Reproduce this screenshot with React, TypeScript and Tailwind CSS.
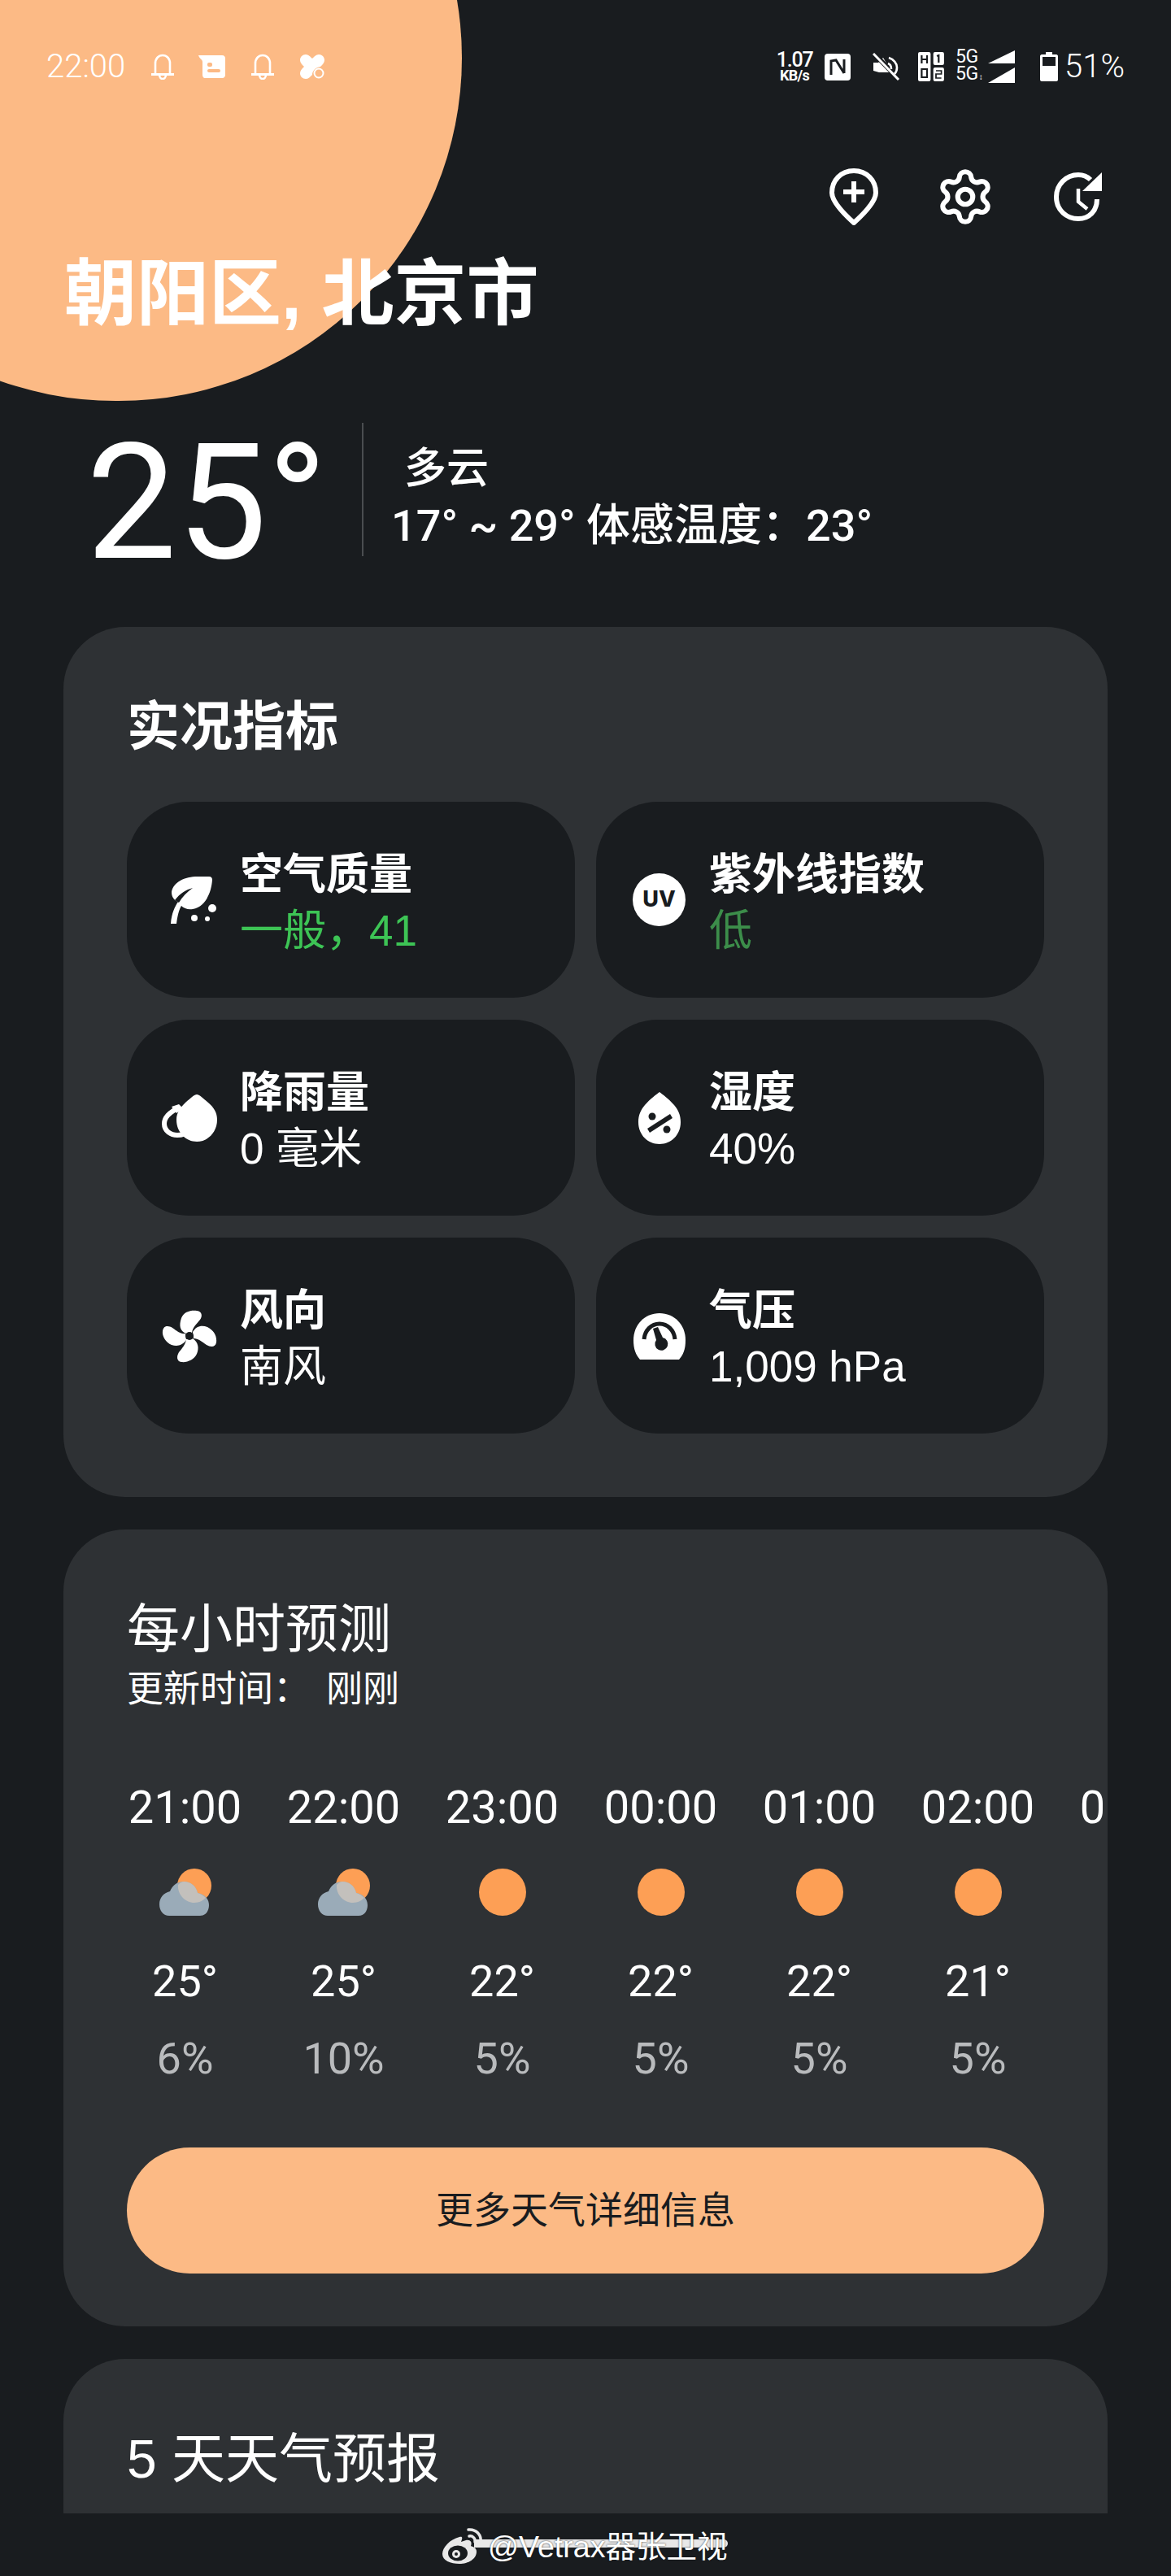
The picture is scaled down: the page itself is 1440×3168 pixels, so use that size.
import React from "react";
import { Settings } from "lucide-react";

const cjk = "font-['Liberation_Sans','Noto_Sans_CJK_SC',sans-serif]";
const thin = "font-['Roboto','Noto_Sans_CJK_SC',sans-serif] font-light";
const num = "font-['Roboto','Noto_Sans_CJK_SC',sans-serif] font-normal";

function Bell() {
  return (
    <svg width="30" height="32" viewBox="0 0 30 32" fill="none" stroke="white" strokeWidth="2.6">
      <path d="M6 25V12C6 6 10 2 15 2s9 4 9 10v13" />
      <path d="M1 25.5h28" strokeWidth="3" />
      <path d="M11 26c0 3 2 5 4 5s4-2 4-5" />
    </svg>
  );
}

function Tile({ icon, title, value, color }: { icon: React.ReactNode; title: string; value: string; color?: string }) {
  return (
    <div className="flex h-[241px] items-center rounded-[76px] bg-[#191c1f]">
      <div className="flex w-[139px] shrink-0 justify-center pl-[14px]">{icon}</div>
      <div className={`${cjk} flex flex-col pt-[6px]`}>
        <div className="text-[53px] leading-[69px] font-bold text-white">{title}</div>
        <div className={`text-[53px] leading-[69px] ${color ?? "text-white"}`}>{value}</div>
      </div>
    </div>
  );
}

const Leaf = (
  <svg className="ml-[8px]" width="60" height="60" viewBox="0 0 60 60" fill="white">
    <path d="M3 59C4 46 8 38 12 32C7 30 4 26 4 20C6 8 20 1 36 1H50C53 1 54 3 54 5C53 20 46 38 30 41C24 42 19 40 16 37C13 42 11 50 10 59Z" />
    <path d="M8 30C14 22 22 17 30 15C23 20 17 26 13 33Z" fill="#191c1f" />
    <circle cx="54" cy="40" r="5" />
    <circle cx="32" cy="52" r="4" />
    <circle cx="48" cy="53" r="3" />
  </svg>
);

const Drops = (
  <svg width="70" height="60" viewBox="0 0 70 60" fill="white">
    <path d="M44 1C47 1 51 5 58 11C65 17 69 23 69 32C69 48 57 59 44 59C31 59 19 48 19 32C19 23 24 17 30 11C37 5 41 1 44 1Z" />
    <path d="M18 19C14 22 4 27 4 37C4 46 12 51 20 51C23 51 25 51 27 50" fill="none" stroke="white" strokeWidth="6" />
    <path d="M13 16L22 13L27 18L19 24Z" />
  </svg>
);

const Uv = (
  <div className="ml-[2px] flex h-[65px] w-[65px] items-center justify-center rounded-full bg-white font-['Inter',sans-serif] text-[27px] font-extrabold text-[#191c1f]">UV</div>
);

const Humid = (
  <svg className="ml-[2px]" width="54" height="66" viewBox="0 0 54 66" fill="white">
    <path d="M27 1C31 4 38 9 45 17C50 23 53 29 53 38C53 54 41 65 27 65C13 65 1 54 1 38C1 29 4 23 9 17C16 9 23 4 27 1Z" />
    <g fill="#191c1f">
      <path d="M12 46L40 28L43 33L15 51Z" />
      <circle cx="18" cy="31" r="4.5" />
      <circle cx="36" cy="47" r="4.5" />
    </g>
  </svg>
);

const Fan = (
  <svg width="68" height="66" viewBox="0 0 68 66" fill="white">
    <path d="M30 30C22 27 21 20 24 11C27 3 36 1 43 2C50 3 50 9 47 13C43 18 38 22 37 29Z" />
    <path d="M38 28C42 21 49 19 56 22C64 26 68 33 67 41C66 47 60 47 55 44C49 40 45 36 39 36Z" />
    <path d="M38 36C45 41 46 48 43 55C40 62 31 66 24 65C18 64 18 58 21 53C25 48 29 44 30 37Z" />
    <path d="M30 38C25 45 19 46 12 44C5 41 0 33 1 27C2 20 8 20 13 23C19 27 23 31 29 30Z" />
    <circle cx="34" cy="33" r="5" fill="#191c1f" />
  </svg>
);

const Gauge = (
  <svg className="ml-[2px]" width="66" height="58" viewBox="0 0 66 58" fill="white">
    <path d="M9 58C4 52 1 46 1 34C1 15 15 1 33 1C51 1 65 15 65 34C65 46 62 52 57 58Z" />
    <path d="M14 33C15 22 23 14 33 14C43 14 51 22 52 33" fill="none" stroke="#191c1f" strokeWidth="5" />
    <path d="M25 20L31 18L37 31A8 8 0 1 1 29 34Z" fill="#191c1f" />
  </svg>
);

function Sun() {
  return <div className="h-[58px] w-[58px] rounded-full bg-[#fd9f55]" />;
}

function CloudSun() {
  return (
    <svg width="64" height="58" viewBox="0 0 64 58">
      <circle cx="43" cy="21" r="21" fill="#fd9f55" />
      <path d="M12 58C5 58 0 52 0 44C0 36 5 30 13 28C16 21 21 16 30 16C38 16 45 21 47 30C54 31 61 36 61 45C61 52 57 58 50 58Z" fill="#9aabb8" />
      <path d="M23 20C26 17 28 16 30 16C38 16 45 21 47 30C51 31 54 33 57 36C54 39 49 42 43 42C32 42 22 32 23 20Z" fill="#c3c0bc" />
    </svg>
  );
}

const hours = [
  { t: "21:00", c: true, d: "25°", p: "6%" },
  { t: "22:00", c: true, d: "25°", p: "10%" },
  { t: "23:00", c: false, d: "22°", p: "5%" },
  { t: "00:00", c: false, d: "22°", p: "5%" },
  { t: "01:00", c: false, d: "22°", p: "5%" },
  { t: "02:00", c: false, d: "21°", p: "5%" },
  { t: "03:00", c: false, d: "", p: "" },
];

function Weibo() {
  return (
    <svg width="56" height="46" viewBox="0 0 56 46" fill="none">
      <path d="M22 12C10 15 1 25 1 33C1 41 11 45 22 45C33 45 43 39 43 30C43 25 38 24 36 23C38 18 35 15 30 16L24 18C26 13 26 11 22 12Z" fill="#e8e8e8" />
      <ellipse cx="20" cy="32" rx="12" ry="9.5" fill="#191c1f" />
      <circle cx="18" cy="33" r="5" fill="#e8e8e8" />
      <circle cx="18" cy="33" r="2" fill="#191c1f" />
      <path d="M33 3C42 2 50 9 48 20M34 11C38 10 42 14 41 18" stroke="#e8e8e8" strokeWidth="3.5" strokeLinecap="round" />
    </svg>
  );
}

export default function App() {
  return (
    <div className="relative h-[3168px] w-[1440px] overflow-hidden bg-[#191c1f]">
      <div className="absolute left-[-280px] top-[-351px] h-[844px] w-[848px] rounded-full bg-[#fcba85]" />

      <div className="relative">
        {/* status bar */}
        <div className="box-content flex h-[44px] items-center pl-[57px] pt-[60px] text-white">
          <span className={`${thin} w-[128px] text-[40px] leading-[44px]`}>22:00</span>
          <Bell />
          <svg className="ml-[29px]" width="34" height="28" viewBox="0 0 34 28" fill="white">
            <path d="M0 0H29C32 0 33 2 33 4V24C33 26 32 28 29 28H8C6 28 5 26 5 24V8C5 5 1 4 0 0Z" />
            <rect x="11" y="9" width="6" height="5" rx="2" fill="#fcba85" />
            <rect x="11" y="17" width="16" height="4" rx="2" fill="#fcba85" />
          </svg>
          <div className="ml-[30px]"><Bell /></div>
          <svg className="ml-[31px]" width="30" height="30" viewBox="0 0 30 30" fill="white">
            <path d="M7 0C3 0 0 3 0 7C0 10 2 12 5 15C2 18 0 20 0 23C0 27 3 30 7 30C10 30 12 28 15 25C15 20 19 16 25 15C28 12 30 10 30 7C30 3 27 0 23 0C20 0 17 3 15 5C13 3 10 0 7 0Z" />
            <circle cx="23" cy="23" r="5.5" fill="none" stroke="white" strokeWidth="2" />
          </svg>
          <div className="ml-auto flex items-center pr-[57px]">
            <div className="flex w-[42px] flex-col items-center font-['Roboto',sans-serif] font-medium">
              <span className="text-[25px] leading-[22px] tracking-[-1.2px]">1.07</span>
              <span className="text-[18px] leading-[16px] font-bold tracking-[-0.7px]">KB/s</span>
            </div>
            <svg className="ml-[16px]" width="32" height="33" viewBox="0 0 32 33" fill="none">
              <rect width="32" height="33" rx="4" fill="white" />
              <path d="M8 26V9L14 8L24 24M24 7V24" stroke="#191c1f" strokeWidth="3" />
            </svg>
            <svg className="ml-[27px]" width="34" height="34" viewBox="0 0 34 34" fill="none">
              <path d="M1 12H7L13 6L24 24H8L1 22Z" fill="white" />
              <path d="M2 1L33 33" stroke="#191c1f" strokeWidth="6" />
              <path d="M1 1L32 33" stroke="white" strokeWidth="3" />
              <path d="M20 6C26 8 30 13 30 18C30 21 29 24 27 26M19 13C22 14 23 17 23 20" stroke="white" strokeWidth="2.6" />
            </svg>
            <svg className="ml-[22px]" width="33" height="36" viewBox="0 0 30 36" preserveAspectRatio="none">
              <rect x="0" y="0" width="14" height="36" rx="2" fill="white" />
              <rect x="17" y="0" width="12" height="16" rx="2" fill="white" />
              <rect x="17" y="19" width="12" height="17" rx="2" fill="white" />
              <path d="M4 4V14M10 4V14M4 9H10" stroke="#191c1f" strokeWidth="2" fill="none" />
              <rect x="4" y="21" width="6" height="10" fill="none" stroke="#191c1f" strokeWidth="2" />
              <path d="M21 5L23 4V13" stroke="#191c1f" strokeWidth="2" fill="none" />
              <path d="M20 23H26V27H20V32H26" stroke="#191c1f" strokeWidth="1.6" fill="none" />
            </svg>
            <div className="ml-[13px] flex w-[40px] flex-col font-['Roboto',sans-serif] text-[23px] leading-[21px] tracking-[-0.5px]">
              <span>5G</span>
              <span className="whitespace-nowrap">5G<span className="ml-[1px] text-[10px]">↕</span></span>
            </div>
            <svg width="33" height="40" viewBox="0 0 33 40" fill="white">
              <path d="M33 0V16H0Z" />
              <path d="M33 21V40H0Z" />
            </svg>
            <svg className="ml-[31px]" width="22" height="36" viewBox="0 0 22 36" fill="white">
              <rect x="7" y="0" width="8" height="4" />
              <path fillRule="evenodd" d="M2 3H20C21 3 22 4 22 5V34C22 35 21 36 20 36H2C1 36 0 35 0 34V5C0 4 1 3 2 3ZM3 6V17H19V6Z" />
            </svg>
            <span className={`${thin} ml-[8px] text-[40px] leading-[44px]`}>51%</span>
          </div>
        </div>

        {/* actions */}
        <div className="mt-[103px] flex h-[70px] items-center justify-end pr-[84px] text-white">
          <svg width="60" height="70" viewBox="0 0 60 70" fill="none" stroke="white" strokeWidth="6">
            <path d="M30 3C14 3 3 15 3 30C3 41 20 58 30 67C40 58 57 41 57 30C57 15 46 3 30 3Z" strokeLinejoin="round" />
            <path d="M17 29H43M30 16V42" strokeWidth="6" />
          </svg>
          <Settings className="ml-[70px]" size={74} strokeWidth={2} color="white" />
          <svg className="ml-[72px]" width="60" height="60" viewBox="0 0 60 60" fill="none" stroke="white" strokeWidth="6">
            <path d="M53 33C53 48 43 57 30 57C16 57 3 47 3 30C3 15 15 3 30 3C36 3 41 5 45 9" />
            <path d="M59 0V23H35Z" fill="white" stroke="none" />
            <path d="M30 20V36L41 45" strokeWidth="4.5" />
          </svg>
        </div>

        {/* title */}
        <div className={`${cjk} mt-[34px] pl-[79px] text-[89px] leading-[100px] font-bold text-white`}>朝阳区, 北京市</div>

        {/* now */}
        <div className="mt-[109px] flex h-[164px] items-start text-white">
          <div className={`${num} w-[445px] whitespace-nowrap pl-[106px] pt-[16px] text-[198px] leading-[164px]`}>25°</div>
          <div className="h-[164px] w-[2px] bg-[#4a4d50]" />
          <div className="flex flex-col pl-[34px] font-['Roboto','Noto_Sans_CJK_SC',sans-serif] font-medium">
            <div className="pl-[16px] pt-[27px] text-[52px] leading-[60px]">多云</div>
            <div className="mt-[10px] whitespace-nowrap text-[54px] leading-[60px]">17° ~ 29° 体感温度：23°</div>
          </div>
        </div>

        {/* indicators */}
        <div className="mx-[78px] mt-[87px] h-[1070px] rounded-[76px] bg-[#2e3134] px-[78px] pt-[88px]">
          <div className={`${cjk} text-[65px] leading-[70px] font-bold text-white`}>实况指标</div>
          <div className="mt-[57px] grid grid-cols-2 gap-x-[26px] gap-y-[27px]">
            <Tile icon={Leaf} title="空气质量" value="一般，41" color="text-[#3dc455]" />
            <Tile icon={Uv} title="紫外线指数" value="低" color="text-[#3c8d4a]" />
            <Tile icon={Drops} title="降雨量" value="0 毫米" />
            <Tile icon={Humid} title="湿度" value="40%" />
            <Tile icon={Fan} title="风向" value="南风" />
            <Tile icon={Gauge} title="气压" value="1,009 hPa" />
          </div>
        </div>

        {/* hourly */}
        <div className="mx-[78px] mt-[40px] h-[980px] rounded-[76px] bg-[#2e3134] pt-[88px]">
          <div className="px-[78px]">
            <div className={`${cjk} text-[65px] leading-[70px] text-white`}>每小时预测</div>
            <div className={`${cjk} mt-[14px] text-[45px] leading-[50px] text-white`}>
              更新时间：<span className="ml-[20px]">刚刚</span>
            </div>
          </div>
          <div className="ml-[52px] mt-[80px] flex w-[1226px] overflow-hidden py-[10px]">
            {hours.map((h) => (
              <div key={h.t} className="flex w-[195px] shrink-0 flex-col items-center text-white">
                <div className={`${num} text-[56px] leading-[60px] whitespace-nowrap`}>{h.t}</div>
                <div className="mt-[45px] flex h-[58px] items-center justify-center">
                  {h.p ? (h.c ? <CloudSun /> : <Sun />) : null}
                </div>
                <div className={`${num} mt-[56px] h-[50px] text-[54px] leading-[50px]`}>{h.d}</div>
                <div className={`${num} mt-[45px] h-[50px] text-[54px] leading-[50px] text-[#b9bbbd]`}>{h.p}</div>
              </div>
            ))}
          </div>
          <div className="mx-[78px] mt-[74px] flex h-[155px] items-center justify-center rounded-full bg-[#fcba85]">
            <span className={`${cjk} text-[46px] text-[#191c1f]`}>更多天气详细信息</span>
          </div>
        </div>

        {/* five day */}
        <div className="mx-[78px] mt-[40px] h-[190px] rounded-t-[76px] bg-[#2e3134] px-[78px] pt-[88px]">
          <div className={`${cjk} text-[66px] leading-[70px] text-white`}>5 天天气预报</div>
        </div>
      </div>

      {/* watermark */}
      <div className="absolute left-[543px] top-[3108px] flex items-end">
        <div className="absolute left-[40px] top-[15px] h-[10px] w-[312px] rounded-r-full bg-[#e8e8e8]" />
        <div className="relative"><Weibo /></div>
        <span className={`${cjk} relative ml-[1px] text-[37.5px] leading-[44px] text-white [text-shadow:0_0_2px_#191c1f]`}>@Vetrax器张卫视</span>
      </div>
    </div>
  );
}
